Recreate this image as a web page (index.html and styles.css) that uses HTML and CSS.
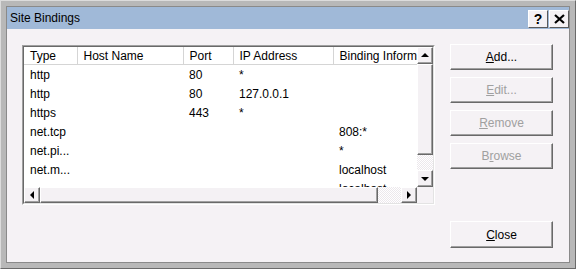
FILE: index.html
```html
<!DOCTYPE html>
<html lang="en">
<head>
  <meta charset="UTF-8">
  <title>Site Bindings</title>
  <link rel="stylesheet" href="styles.css">
</head>
<body>

  <div class="window">
    <div class="frame">

      <div class="titlebar">
        <span class="title">Site Bindings</span>
        <div class="caption-btns">
          <span class="cap-btn help">?</span>
          <span class="cap-btn">
            <svg width="11" height="10" viewBox="0 0 11 10">
              <path d="M1 1 L10 9 M10 1 L1 9" stroke="#000" stroke-width="2.2" fill="none"/>
            </svg>
          </span>
        </div>
      </div>

      <div class="client">
        <div class="listbox">
          <div class="listbox-inner">
            <div class="list-view">
              <table class="bindings">
                <colgroup>
                  <col class="c-type">
                  <col class="c-host">
                  <col class="c-port">
                  <col class="c-ip">
                  <col class="c-info">
                </colgroup>
                <thead>
                  <tr>
                    <th>Type</th>
                    <th>Host Name</th>
                    <th>Port</th>
                    <th>IP Address</th>
                    <th>Binding Informa</th>
                  </tr>
                </thead>
                <tbody>
                  <tr><td>http</td><td></td><td>80</td><td>*</td><td></td></tr>
                  <tr><td>http</td><td></td><td>80</td><td>127.0.0.1</td><td></td></tr>
                  <tr><td>https</td><td></td><td>443</td><td>*</td><td></td></tr>
                  <tr><td>net.tcp</td><td></td><td></td><td></td><td>808:*</td></tr>
                  <tr><td>net.pi...</td><td></td><td></td><td></td><td>*</td></tr>
                  <tr><td>net.m...</td><td></td><td></td><td></td><td>localhost</td></tr>
                  <tr><td></td><td></td><td></td><td></td><td>localhost</td></tr>
                </tbody>
              </table>
            </div>

            <div class="vscroll">
              <span class="sb-btn"><i class="arrow up"></i></span>
              <span class="sb-thumb v-thumb"></span>
              <span class="sb-track"></span>
              <span class="sb-btn"><i class="arrow down"></i></span>
            </div>

            <div class="hscroll">
              <span class="sb-btn"><i class="arrow left"></i></span>
              <span class="sb-thumb h-thumb"></span>
              <span class="sb-track"></span>
              <span class="sb-btn"><i class="arrow right"></i></span>
            </div>

            <div class="corner"></div>
          </div>
        </div>

        <div class="actions">
          <button class="btn"><u>A</u>dd...</button>
          <button class="btn disabled"><u>E</u>dit...</button>
          <button class="btn disabled"><u>R</u>emove</button>
          <button class="btn disabled">B<u>r</u>owse</button>
          <button class="btn close"><u>C</u>lose</button>
        </div>
      </div>

    </div>
  </div>

</body>
</html>
```

FILE: styles.css
```css
body {
  margin: 0;
  font-family: 'Liberation Sans', Arial, sans-serif;
  font-size: 12px;
  color: #000;
  background: #b8b8b8;
}

.window {
  width: 576px;
  height: 269px;
  box-sizing: border-box;
  padding: 5px;
  background: #b8b8b8;
  border: 1px solid;
  border-color: #dcdcdc #6a6a6a #6a6a6a #dcdcdc;
}

.frame {
  height: 100%;
  box-sizing: border-box;
  border: 1px solid #8a8a8a;
  display: flex;
  flex-direction: column;
}

/* title bar */
.titlebar {
  height: 22px;
  flex: none;
  background: #a0b9d8;
  display: flex;
  align-items: center;
  justify-content: space-between;
  padding: 0 0 0 3px;
}

.title {
  font-size: 12px;
  padding-bottom: 1px;
}

.caption-btns {
  display: flex;
  gap: 1px;
  margin-top: 1px;
}

.cap-btn {
  width: 18px;
  height: 16px;
  background: #f4f1f4;
  border: 1px solid;
  border-color: #fff #5a5a5a #5a5a5a #fff;
  display: flex;
  align-items: center;
  justify-content: center;
}

.cap-btn.help {
  font-weight: bold;
  font-size: 14px;
}

/* client area */
.client {
  flex: 1;
  background: #f5f2f5;
  display: flex;
  padding: 15px 16px 14px 15px;
  gap: 15px;
}

.listbox {
  width: 413px;
  height: 160px;
  margin-top: 1px;
  box-sizing: border-box;
  border: 1px solid;
  border-color: #a0a0a0 #fff #fff #a0a0a0;
}

.listbox-inner {
  height: 100%;
  box-sizing: border-box;
  border: 1px solid;
  border-color: #696969 #e3e3e3 #e3e3e3 #696969;
  display: grid;
  grid-template-columns: 1fr 16px;
  grid-template-rows: 1fr 16px;
}

.list-view {
  background: #fff;
  overflow: hidden;
}

.bindings {
  table-layout: fixed;
  border-collapse: collapse;
  width: 409px;
}

.c-type { width: 53px; }
.c-host { width: 106px; }
.c-port { width: 50px; }
.c-ip { width: 100px; }
.c-info { width: 100px; }

.bindings th {
  height: 17px;
  padding: 0 0 0 6px;
  font-weight: normal;
  text-align: left;
  white-space: nowrap;
  overflow: hidden;
  border-right: 1px solid #d5d5d5;
  border-bottom: 1px solid #d5d5d5;
}

.bindings td {
  height: 19px;
  padding: 0 0 0 6px;
  white-space: nowrap;
  overflow: hidden;
}

/* scroll bars */
.vscroll {
  display: flex;
  flex-direction: column;
}

.hscroll {
  display: flex;
}

.sb-btn,
.sb-thumb {
  box-sizing: border-box;
  background: #f4f1f4;
  border: 1px solid;
  border-color: #fff #696969 #696969 #fff;
  box-shadow: inset -1px -1px #a0a0a0;
  display: flex;
  align-items: center;
  justify-content: center;
}

.vscroll .sb-btn {
  height: 17px;
  flex: none;
}

.hscroll .sb-btn {
  width: 16px;
  flex: none;
}

.v-thumb {
  height: 91px;
  flex: none;
}

.h-thumb {
  width: 338px;
  flex: none;
}

.sb-track {
  flex: 1;
  background: repeating-conic-gradient(#ece8ec 0 25%, #fff 0 50%) 0 0 / 2px 2px;
}

.corner {
  background: #f5f2f5;
}

.arrow {
  width: 0;
  height: 0;
  border: 4px solid transparent;
}

.arrow.up {
  border-bottom-color: #000;
  border-top-width: 0;
  margin-top: -1px;
}

.arrow.down {
  border-top-color: #000;
  border-bottom-width: 0;
}

.arrow.left {
  border-right-color: #000;
  border-left-width: 0;
}

.arrow.right {
  border-left-color: #000;
  border-right-width: 0;
}

/* buttons */
.actions {
  display: flex;
  flex-direction: column;
  gap: 7px;
  width: 103px;
}

.btn {
  height: 26px;
  box-sizing: border-box;
  font-family: inherit;
  font-size: 12px;
  color: #000;
  background: #f5f2f5;
  border: 1px solid;
  border-color: #fff #696969 #696969 #fff;
  box-shadow: inset -1px -1px #a0a0a0;
  padding: 0;
}

.btn.disabled {
  color: #a0a0a0;
}

.btn.close {
  margin-top: auto;
  height: 27px;
}
```
